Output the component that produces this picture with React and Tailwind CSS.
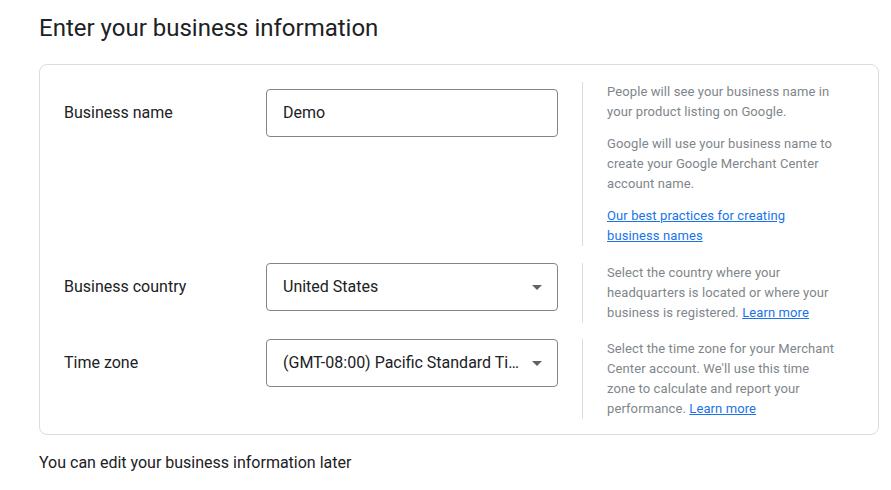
import React from 'react';

const Field = ({ value, select }) => (
  <div className="flex h-[48px] w-[292px] items-center rounded-[4px] border border-[#80868b] pl-4 pr-[15px]">
    <span className="flex-1 truncate text-[16px] text-[#202124]">{value}</span>
    {select && (
      <svg width="10" height="5" viewBox="0 0 10 5" className="ml-2 shrink-0">
        <path d="M0 0h10L5 5z" fill="#5f6368" />
      </svg>
    )}
  </div>
);

const LearnMore = ({ children }) => (
  <a href="#" className="text-[#1a73e8] underline">{children}</a>
);

const Row = ({ label, field, top, children }) => (
  <div className="flex items-start">
    <div className={`flex items-center ${top}`}>
      <div className="w-[202px] text-[16px] text-[#202124]">{label}</div>
      {field}
    </div>
    <div className="ml-[24px] border-l border-[#dadce0] pl-6">
      <div className="w-[229px] text-[13px] leading-5 tracking-[0.1px] text-[#80868b]">{children}</div>
    </div>
  </div>
);

export default function App() {
  return (
    <div className="min-h-screen bg-white px-[39px] pt-[12px]" style={{ fontFamily: 'Roboto, "Liberation Sans", sans-serif' }}>
      <h1 className="text-[24px] leading-8 text-[#202124]">Enter your business information</h1>

      <div className="mt-[20px] flex w-[840px] flex-col gap-4 rounded-lg border border-[#dadce0] pb-[15px] pl-6 pt-[17px]">
        <div className="pb-px">
          <Row label="Business name" field={<Field value="Demo" />} top="mt-[7px]">
            <p>People will see your business name in your product listing on Google.</p>
            <p className="mt-3">Google will use your business name to create your Google Merchant Center account name.</p>
            <p className="mt-3"><LearnMore>Our best practices for creating business names</LearnMore></p>
          </Row>
        </div>
        <Row label="Business country" field={<Field value="United States" select />}>
          <p>Select the country where your headquarters is located or where your business is registered. <LearnMore>Learn more</LearnMore></p>
        </Row>
        <Row label="Time zone" field={<Field value="(GMT-08:00) Pacific Standard Time" select />}>
          <p>Select the time zone for your Merchant Center account. We&apos;ll use this time zone to calculate and report your performance. <LearnMore>Learn more</LearnMore></p>
        </Row>
      </div>

      <p className="mt-[16px] text-[16px] leading-6 text-[#202124]">You can edit your business information later</p>
    </div>
  );
}
